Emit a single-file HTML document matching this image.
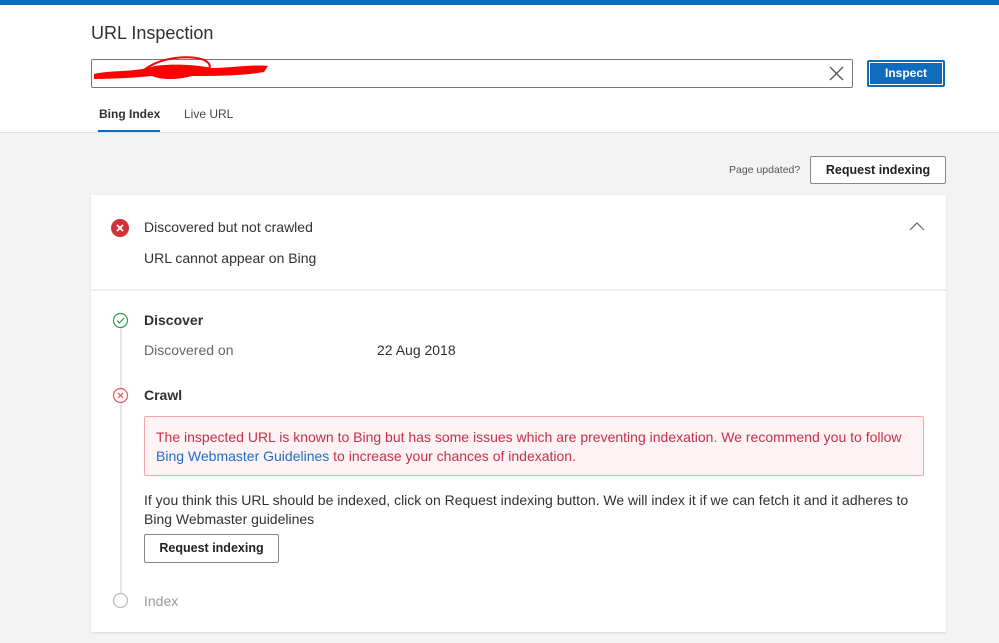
<!DOCTYPE html>
<html><head><style>
*{margin:0;padding:0;box-sizing:border-box}
body{width:999px;height:643px;background:#f3f3f3;font-family:"Liberation Sans",sans-serif;color:#323130;position:relative;overflow:hidden}
.a{position:absolute;white-space:nowrap}
</style></head><body>
<div class="a" style="left:0;top:0;width:999px;height:5px;background:#0f6cbd"></div>
<div class="a" style="left:0;top:5px;width:999px;height:128px;background:#fff;border-bottom:1px solid #e1e1e1"></div>
<div class="a" style="left:91px;top:23px;font-size:18px;color:#323130">URL Inspection</div>
<div class="a" style="left:91px;top:59px;width:762px;height:29px;border:1px solid #777;border-radius:2px;background:#fff"></div>
<svg class="a" style="left:92px;top:54px" width="180" height="30"><path d="M2 20 C20 16,40 18,55 14 C70 9,100 10,120 14 C140 14,160 10,176 12 L172 18 C150 22,120 22,100 22 C85 26,70 26,60 22 C40 24,20 25,2 25Z" fill="#f00"/><path d="M52 16 C70 2,100 1,112 6 C120 10,118 14,116 16" stroke="#f00" stroke-width="2" fill="none"/></svg>
<svg class="a" style="left:829px;top:66px" width="15" height="15"><path d="M1 1L14 14M14 1L1 14" stroke="#555" stroke-width="1.3"/></svg>
<div class="a" style="left:867px;top:60px;width:78px;height:27px;background:#0f6cbd;border:2px solid #0f6cbd;box-shadow:inset 0 0 0 1px #fff;border-radius:2px;color:#fff;font-size:12px;font-weight:bold;text-align:center;line-height:23px">Inspect</div>
<div class="a" style="left:99px;top:107px;font-size:12px;font-weight:bold">Bing Index</div>
<div class="a" style="left:184px;top:107px;font-size:12px;color:#444">Live URL</div>
<div class="a" style="left:98px;top:130px;width:62px;height:2px;background:#0f6cbd"></div>
<div class="a" style="left:729px;top:164px;font-size:10.5px;color:#555">Page updated?</div>
<div class="a" style="left:810px;top:156px;width:136px;height:28px;background:#fff;border:1px solid #888;border-radius:2px;font-size:12.5px;font-weight:bold;text-align:center;line-height:26px;color:#222">Request indexing</div>
<div class="a" style="left:91px;top:195px;width:855px;height:437px;background:#fff;box-shadow:0 1px 2px rgba(0,0,0,.12)"></div>
<div class="a" style="left:91px;top:289px;width:855px;height:2px;background:#ececec"></div>
<svg class="a" style="left:111px;top:219px" width="18" height="18"><circle cx="9" cy="9" r="9" fill="#d13438"/><path d="M6 6L12 12M12 6L6 12" stroke="#fff" stroke-width="1.8"/></svg>
<div class="a" style="left:144px;top:219px;font-size:14px">Discovered but not crawled</div>
<div class="a" style="left:144px;top:250px;font-size:14px">URL cannot appear on Bing</div>
<svg class="a" style="left:909px;top:221px" width="16" height="10"><path d="M1 9L8 2L15 9" stroke="#666" stroke-width="1.2" fill="none"/></svg>
<div class="a" style="left:120px;top:328px;width:2px;height:265px;background:#e6e6e6"></div>
<svg class="a" style="left:112px;top:312px" width="17" height="17"><circle cx="8.5" cy="8.5" r="7" fill="#fff" stroke="#2e9b4d" stroke-width="1.2"/><path d="M5 8.5L7.5 11L12 6" stroke="#2e9b4d" stroke-width="1.2" fill="none"/></svg>
<div class="a" style="left:144px;top:312px;font-size:14px;font-weight:bold">Discover</div>
<div class="a" style="left:144px;top:342px;font-size:14px;color:#666">Discovered on</div>
<div class="a" style="left:377px;top:342px;font-size:14px">22 Aug 2018</div>
<svg class="a" style="left:112px;top:387px" width="17" height="17"><circle cx="8.5" cy="8.5" r="7" fill="#fff" stroke="#e0585c" stroke-width="1.2"/><path d="M6 6L11 11M11 6L6 11" stroke="#e0585c" stroke-width="1.2"/></svg>
<div class="a" style="left:144px;top:387px;font-size:14px;font-weight:bold">Crawl</div>
<div class="a" style="left:144px;top:416px;width:780px;height:60px;background:#fdf3f4;border:1px solid #f1a7ab;border-radius:2px"></div>
<div class="a" style="left:156px;top:428px;font-size:14px;color:#c4314b;line-height:19px">The inspected URL is known to Bing but has some issues which are preventing indexation. We recommend you to follow<br><span style="color:#1f6fbf">Bing Webmaster Guidelines</span> to increase your chances of indexation.</div>
<div class="a" style="left:144px;top:491px;font-size:14px;line-height:19px">If you think this URL should be indexed, click on Request indexing button. We will index it if we can fetch it and it adheres to<br>Bing Webmaster guidelines</div>
<div class="a" style="left:144px;top:534px;width:135px;height:29px;border:1px solid #888;border-radius:2px;background:#fff;font-size:12.5px;font-weight:bold;text-align:center;line-height:27px;color:#222">Request indexing</div>
<svg class="a" style="left:112px;top:592px" width="17" height="17"><circle cx="8.5" cy="8.5" r="7" fill="#fff" stroke="#bbb" stroke-width="1.3"/></svg>
<div class="a" style="left:144px;top:593px;font-size:14px;color:#999">Index</div>
</body></html>
